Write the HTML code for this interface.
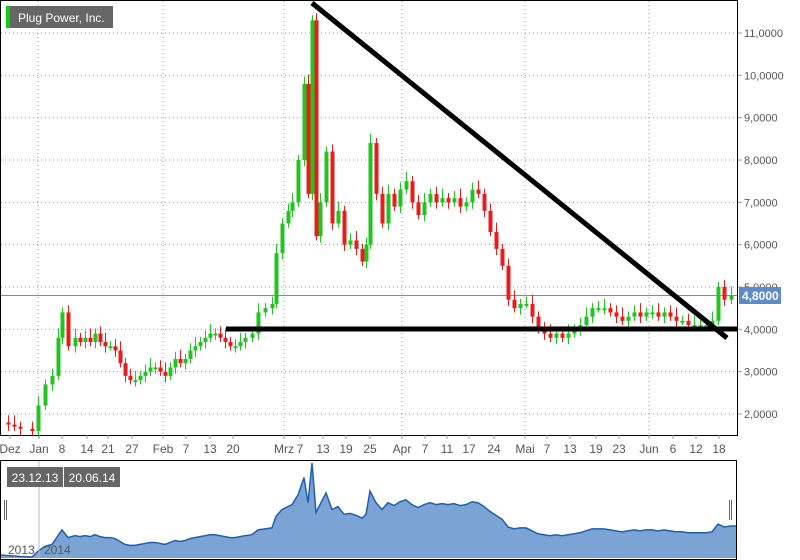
<!DOCTYPE html><html><head><meta charset="utf-8"><style>
body{margin:0;background:#fff;font-family:"Liberation Sans",sans-serif}
svg{display:block}
text{font-family:"Liberation Sans",sans-serif}
</style></head><body>
<svg id="s" width="800" height="560" xmlns="http://www.w3.org/2000/svg"></svg>
<script>
const s=document.getElementById('s');let h='';
const Y=v=>414-(v-2)*42.33;
for(let v=2;v<=11;v++){h+=`<line x1="1" x2="737" y1="${Y(v)}" y2="${Y(v)}" stroke="#999" stroke-dasharray="1,3"/>`;
h+=`<line x1="737" x2="742" y1="${Y(v)}" y2="${Y(v)}" stroke="#999"/><text x="744" y="${Y(v)+4}" font-size="11" fill="#555">${v},0000</text>`;}
[38,163,284,402,525,649].forEach(x=>h+=`<line x1="${x}" x2="${x}" y1="1" y2="435" stroke="#999" stroke-dasharray="1,3"/>`);
const P=[[2,1.8],[8,1.75],[14,1.7],[20,1.65],[32,1.6],[38,2.2],[45,2.7],[52,2.9],[58,3.8],[62,4.4],[68,3.6],[75,3.8],[80,3.7],[85,3.8],[90,3.7],[95,3.9],[100,3.7],[105,3.6],[110,3.6],[115,3.5],[120,3.2],[125,2.9],[130,2.8],[135,2.8],[140,2.9],[145,3.0],[150,3.1],[155,3.1],[160,3.0],[165,2.9],[170,3.1],[175,3.3],[180,3.2],[185,3.3],[190,3.5],[195,3.6],[200,3.7],[205,3.8],[210,3.9],[215,3.9],[220,3.8],[225,3.7],[230,3.6],[235,3.6],[240,3.7],[245,3.8],[252,3.9],[258,4.4],[265,4.5],[272,4.6],[276,5.8],[282,6.5],[288,6.8],[292,7.0],[298,8.0],[304,9.8],[308,7.2],[312,11.3],[316,6.2],[320,7.0],[326,8.2],[332,6.5],[338,6.8],[344,6.0],[350,6.1],[356,5.9],[362,5.6],[366,6.0],[370,8.4],[376,7.2],[382,6.5],[388,7.2],[394,6.9],[400,7.3],[406,7.5],[412,7.0],[418,6.7],[424,7.0],[430,7.2],[436,7.0],[442,7.1],[448,7.0],[454,7.1],[460,6.9],[466,7.0],[472,7.3],[478,7.2],[484,6.8],[490,6.3],[496,5.9],[502,5.5],[508,4.7],[514,4.5],[520,4.6],[526,4.6],[532,4.3],[538,4.0],[544,3.9],[550,3.8],[556,3.9],[562,3.8],[568,3.9],[574,4.0],[580,4.1],[586,4.3],[592,4.5],[598,4.5],[604,4.5],[610,4.4],[616,4.3],[622,4.2],[628,4.3],[634,4.4],[640,4.3],[646,4.4],[652,4.4],[658,4.3],[664,4.4],[670,4.3],[676,4.2],[682,4.2],[688,4.1],[694,4.1],[700,4.1],[706,4.1],[712,4.2],[718,5.0],[724,4.7],[731,4.8]];
h+=`<line x1="1" x2="737" y1="${Y(4.8)}" y2="${Y(4.8)}" stroke="#6a8fbf"/>`;
for(let i=1;i<P.length;i++){const [x,c]=P[i],o=P[i-1][1];const up=c>=o;const col=up?'#22c422':'#e81c1c';
const hi=Math.max(o,c)+0.12+0.05*(i%3),lo=Math.min(o,c)-0.1-0.05*(i%2);
h+=`<line x1="${x+0.5}" x2="${x+0.5}" y1="${Y(hi)}" y2="${Y(lo)}" stroke="${col}"/>`;
const t=Y(Math.max(o,c)),b=Y(Math.min(o,c));h+=`<rect x="${x-1.5}" y="${t}" width="4" height="${Math.max(2,b-t)}" fill="${col}"/>`;}
h+=`<line x1="312" y1="3" x2="727" y2="338" stroke="#000" stroke-width="5"/><line x1="226" y1="329" x2="737" y2="329" stroke="#000" stroke-width="5"/>`;
h+=`<rect x="0.5" y="0.5" width="737" height="435" fill="none" stroke="#000"/>`;
h+=`<rect x="739" y="287" width="42" height="17" fill="#5b8bc9"/><text x="742" y="300" font-size="12" font-weight="bold" fill="#fff">4,8000</text>`;
h+=`<rect x="6" y="6" width="107" height="22" fill="#666"/><rect x="6" y="6" width="4" height="22" fill="#1c1"/><text x="18" y="22" font-size="12" fill="#fff">Plug Power, Inc.</text>`;
[[10,'Dez'],[39,'Jan'],[62,'8'],[87,'14'],[108,'21'],[132,'27'],[163,'Feb'],[186,'7'],[210,'13'],[233,'20'],[284,'Mrz'],[300,'7'],[323,'13'],[346,'19'],[370,'25'],[402,'Apr'],[425,'7'],[447,'11'],[469,'17'],[494,'24'],[525,'Mai'],[547,'7'],[570,'13'],[596,'19'],[619,'23'],[649,'Jun'],[673,'6'],[696,'12'],[719,'18']].forEach(([x,t])=>{h+=`<line x1="${x}" x2="${x}" y1="435" y2="439" stroke="#999"/><text x="${x}" y="453" font-size="12" fill="#555" text-anchor="middle">${t}</text>`;});
const N=v=>558-(v-1.5)*9.7;let d='M1,558 L1,'+N(1.8);P.forEach(([x,c])=>d+=` L${x},${N(c)}`);d+=' L737,'+N(4.8)+' L737,558Z';
h+=`<path d="${d}" fill="#7ba3d4" stroke="none"/>`;
let dl='M1,'+N(1.8);P.forEach(([x,c])=>dl+=` L${x},${N(c)}`);dl+=' L737,'+N(4.8);h+=`<path d="${dl}" fill="none" stroke="#1f5fb0" stroke-width="1.5"/>`;
h+=`<line x1="39" x2="39" y1="461" y2="558" stroke="#bbb"/><text x="8" y="554" font-size="12" fill="#555">2013</text><text x="44" y="554" font-size="12" fill="#555">2014</text>`;
h+=`<rect x="0.5" y="460.5" width="736" height="99" fill="none" stroke="#000"/>`;
h+=`<rect x="7" y="467" width="56" height="20" fill="#666"/><text x="35" y="482" font-size="12" fill="#fff" text-anchor="middle">23.12.13</text><rect x="64" y="467" width="56" height="20" fill="#666"/><text x="92" y="482" font-size="12" fill="#fff" text-anchor="middle">20.06.14</text>`;
h+=`<rect x="4" y="500" width="1" height="20" fill="#666"/><rect x="6" y="500" width="1" height="20" fill="#666"/><rect x="729" y="500" width="1" height="20" fill="#666"/><rect x="731" y="500" width="1" height="20" fill="#666"/>`;
s.innerHTML=h;
</script></body></html>
